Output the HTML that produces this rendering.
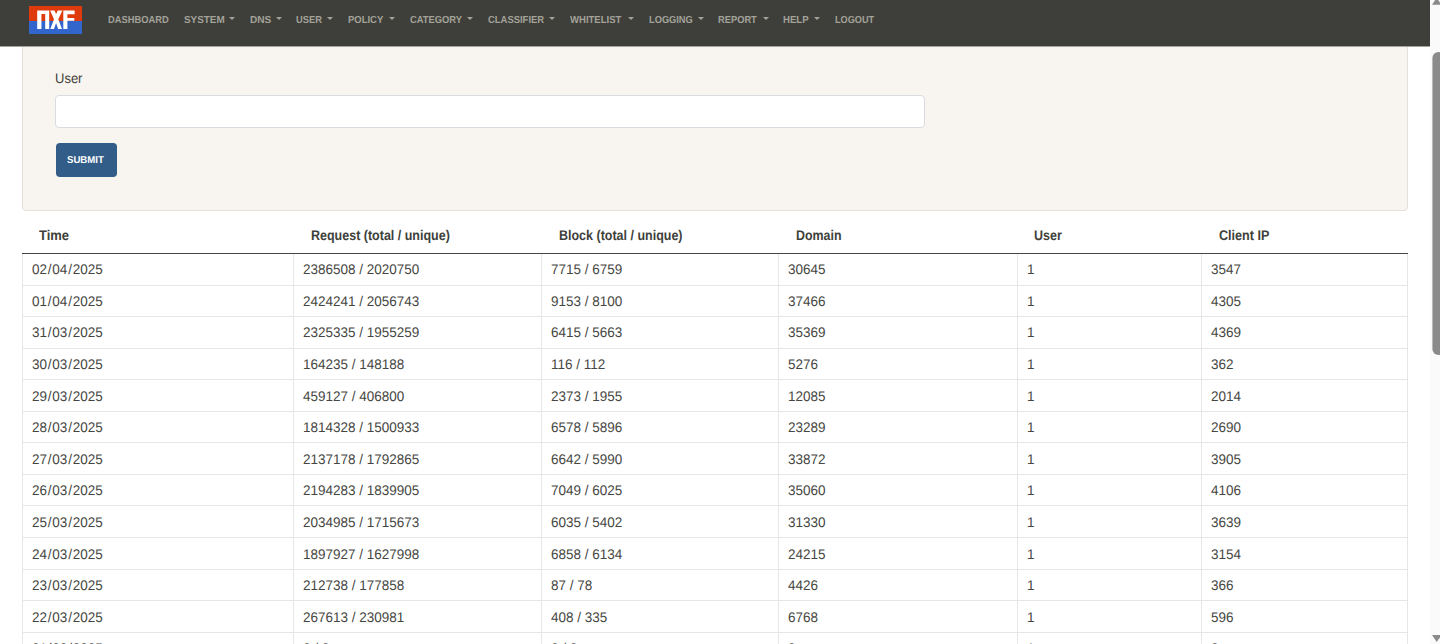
<!DOCTYPE html>
<html><head><meta charset="utf-8"><style>
html,body{margin:0;padding:0;background:#fff;width:1440px;height:644px;overflow:hidden;position:relative}
body{font-family:"Liberation Sans",sans-serif}
.t{position:absolute;white-space:pre;line-height:1;transform-origin:0 0;font-family:"Liberation Sans",sans-serif;text-rendering:geometricPrecision}
.nav{position:absolute;left:0;top:0;width:1430px;height:46px;background:#3e3f3a;z-index:5}
.caret{position:absolute;top:16.8px;width:0;height:0;border-top:3px solid #a3a299;border-left:3px solid transparent;border-right:3px solid transparent}
.card{position:absolute;left:22px;top:-10px;width:1384px;height:219px;background:#f8f5f0;border:1px solid #e5e0d8;border-radius:4px}
.input{position:absolute;left:55px;top:95px;width:868px;height:31px;background:#fff;border:1px solid #d8dce1;border-radius:4px}
.btn{position:absolute;left:55.5px;top:143px;width:61.5px;height:33.5px;background:#325d88;border-radius:4px}
.hl{position:absolute;left:22px;width:1386px;height:1px;background:#e6e6e6}
.vl{position:absolute;top:254px;width:1px;height:390px;background:#e6e6e6}
.sb{position:absolute;left:1430px;top:0;width:10px;height:644px;background:#fafafa;z-index:6}
</style></head><body>
<div style="position:absolute;left:0;top:46px;width:1430px;height:1px;background:#a4a39e;z-index:5"></div>
<div class="nav">
<svg style="position:absolute;left:29px;top:6px" width="53" height="28" viewBox="0 0 53 28"><rect x="0" y="0" width="53" height="15" fill="#df3a0c"/><rect x="0" y="15" width="53" height="13" fill="#3366cc"/><path fill="#fff" d="M8.2 4.4H20.2V22.9H16.2V8H12.45V22.9H8.2Z"/><path fill="#fff" d="M21.1 4.4H25.5L27.1 8.1L28.7 4.4H33.4L29.3 13.2L33 22.9H29.1L27.1 16.9L25 22.9H21.3L25 13.2Z"/><path fill="#fff" d="M34.3 4.4H45.6V8.15H38.4V12.06H45.3V14.86H38.4V22.9H34.3Z"/></svg>
<span class="t" style="left:107.84px;top:15.70px;font-size:10.2px;font-weight:700;color:#a3a299;transform:scaleX(0.9160);">DASHBOARD</span>
<span class="t" style="left:183.66px;top:15.70px;font-size:10.2px;font-weight:700;color:#a3a299;transform:scaleX(0.9697);">SYSTEM</span>
<span class="t" style="left:249.50px;top:15.70px;font-size:10.2px;font-weight:700;color:#a3a299;transform:scaleX(0.9928);">DNS</span>
<span class="t" style="left:296.44px;top:15.70px;font-size:10.2px;font-weight:700;color:#a3a299;transform:scaleX(0.9200);">USER</span>
<span class="t" style="left:348.24px;top:15.70px;font-size:10.2px;font-weight:700;color:#a3a299;transform:scaleX(0.9289);">POLICY</span>
<span class="t" style="left:409.77px;top:15.70px;font-size:10.2px;font-weight:700;color:#a3a299;transform:scaleX(0.9191);">CATEGORY</span>
<span class="t" style="left:488.07px;top:15.70px;font-size:10.2px;font-weight:700;color:#a3a299;transform:scaleX(0.9267);">CLASSIFIER</span>
<span class="t" style="left:570.20px;top:15.70px;font-size:10.2px;font-weight:700;color:#a3a299;transform:scaleX(0.9364);">WHITELIST</span>
<span class="t" style="left:648.94px;top:15.70px;font-size:10.2px;font-weight:700;color:#a3a299;transform:scaleX(0.9101);">LOGGING</span>
<span class="t" style="left:717.84px;top:15.70px;font-size:10.2px;font-weight:700;color:#a3a299;transform:scaleX(0.9143);">REPORT</span>
<span class="t" style="left:783.43px;top:15.70px;font-size:10.2px;font-weight:700;color:#a3a299;transform:scaleX(0.9434);">HELP</span>
<span class="t" style="left:835.15px;top:15.70px;font-size:10.2px;font-weight:700;color:#a3a299;transform:scaleX(0.8971);">LOGOUT</span>
<div class="caret" style="left:229.4px"></div>
<div class="caret" style="left:275.8px"></div>
<div class="caret" style="left:327.2px"></div>
<div class="caret" style="left:388.9px"></div>
<div class="caret" style="left:467.2px"></div>
<div class="caret" style="left:548.9px"></div>
<div class="caret" style="left:628.0px"></div>
<div class="caret" style="left:697.8px"></div>
<div class="caret" style="left:762.6px"></div>
<div class="caret" style="left:814.4px"></div>
</div>
<div class="card"></div>
<span class="t" style="left:54.67px;top:71.20px;font-size:14px;font-weight:400;color:#3e3f3a;transform:scaleX(0.9281);">User</span>
<div class="input"></div>
<div class="btn"></div>
<span class="t" style="left:67.26px;top:155.50px;font-size:10px;font-weight:700;color:#fff;transform:scaleX(0.9621);">SUBMIT</span>
<span class="t" style="left:38.90px;top:228.00px;font-size:14px;font-weight:700;color:#3e3f3a;transform:scaleX(0.9281);">Time</span>
<span class="t" style="left:311.03px;top:228.00px;font-size:14px;font-weight:700;color:#3e3f3a;transform:scaleX(0.8927);">Request (total / unique)</span>
<span class="t" style="left:559.33px;top:228.00px;font-size:14px;font-weight:700;color:#3e3f3a;transform:scaleX(0.8920);">Block (total / unique)</span>
<span class="t" style="left:796.04px;top:228.00px;font-size:14px;font-weight:700;color:#3e3f3a;transform:scaleX(0.8864);">Domain</span>
<span class="t" style="left:1034.03px;top:228.00px;font-size:14px;font-weight:700;color:#3e3f3a;transform:scaleX(0.8926);">User</span>
<span class="t" style="left:1218.75px;top:228.00px;font-size:14px;font-weight:700;color:#3e3f3a;transform:scaleX(0.8982);">Client IP</span>
<div class="hl" style="top:253px;background:#464646"></div>
<div class="hl" style="top:285px"></div>
<div class="hl" style="top:316px"></div>
<div class="hl" style="top:348px"></div>
<div class="hl" style="top:379px"></div>
<div class="hl" style="top:411px"></div>
<div class="hl" style="top:442px"></div>
<div class="hl" style="top:474px"></div>
<div class="hl" style="top:505px"></div>
<div class="hl" style="top:537px"></div>
<div class="hl" style="top:569px"></div>
<div class="hl" style="top:600px"></div>
<div class="hl" style="top:632px"></div>
<div class="vl" style="left:22px"></div>
<div class="vl" style="left:293px"></div>
<div class="vl" style="left:541px"></div>
<div class="vl" style="left:778px"></div>
<div class="vl" style="left:1017px"></div>
<div class="vl" style="left:1201px"></div>
<div class="vl" style="left:1407px"></div>
<span class="t" style="left:31.72px;top:262.05px;font-size:14px;color:#454641;transform:scaleX(0.964)">02<span style="padding:0 0.83px">/</span>04<span style="padding:0 0.83px">/</span>2025</span>
<span class="t" style="left:302.72px;top:262.05px;font-size:14px;color:#454641;transform:scaleX(0.964)">2386508 / 2020750</span>
<span class="t" style="left:550.72px;top:262.05px;font-size:14px;color:#454641;transform:scaleX(0.964)">7715 / 6759</span>
<span class="t" style="left:787.72px;top:262.05px;font-size:14px;color:#454641;transform:scaleX(0.964)">30645</span>
<span class="t" style="left:1026.72px;top:262.05px;font-size:14px;color:#454641;transform:scaleX(0.964)">1</span>
<span class="t" style="left:1210.72px;top:262.05px;font-size:14px;color:#454641;transform:scaleX(0.964)">3547</span>
<span class="t" style="left:31.72px;top:293.68px;font-size:14px;color:#454641;transform:scaleX(0.964)">01<span style="padding:0 0.83px">/</span>04<span style="padding:0 0.83px">/</span>2025</span>
<span class="t" style="left:302.72px;top:293.68px;font-size:14px;color:#454641;transform:scaleX(0.964)">2424241 / 2056743</span>
<span class="t" style="left:550.72px;top:293.68px;font-size:14px;color:#454641;transform:scaleX(0.964)">9153 / 8100</span>
<span class="t" style="left:787.72px;top:293.68px;font-size:14px;color:#454641;transform:scaleX(0.964)">37466</span>
<span class="t" style="left:1026.72px;top:293.68px;font-size:14px;color:#454641;transform:scaleX(0.964)">1</span>
<span class="t" style="left:1210.72px;top:293.68px;font-size:14px;color:#454641;transform:scaleX(0.964)">4305</span>
<span class="t" style="left:31.72px;top:325.31px;font-size:14px;color:#454641;transform:scaleX(0.964)">31<span style="padding:0 0.83px">/</span>03<span style="padding:0 0.83px">/</span>2025</span>
<span class="t" style="left:302.72px;top:325.31px;font-size:14px;color:#454641;transform:scaleX(0.964)">2325335 / 1955259</span>
<span class="t" style="left:550.72px;top:325.31px;font-size:14px;color:#454641;transform:scaleX(0.964)">6415 / 5663</span>
<span class="t" style="left:787.72px;top:325.31px;font-size:14px;color:#454641;transform:scaleX(0.964)">35369</span>
<span class="t" style="left:1026.72px;top:325.31px;font-size:14px;color:#454641;transform:scaleX(0.964)">1</span>
<span class="t" style="left:1210.72px;top:325.31px;font-size:14px;color:#454641;transform:scaleX(0.964)">4369</span>
<span class="t" style="left:31.72px;top:356.94px;font-size:14px;color:#454641;transform:scaleX(0.964)">30<span style="padding:0 0.83px">/</span>03<span style="padding:0 0.83px">/</span>2025</span>
<span class="t" style="left:302.72px;top:356.94px;font-size:14px;color:#454641;transform:scaleX(0.964)">164235 / 148188</span>
<span class="t" style="left:550.72px;top:356.94px;font-size:14px;color:#454641;transform:scaleX(0.964)">116 / 112</span>
<span class="t" style="left:787.72px;top:356.94px;font-size:14px;color:#454641;transform:scaleX(0.964)">5276</span>
<span class="t" style="left:1026.72px;top:356.94px;font-size:14px;color:#454641;transform:scaleX(0.964)">1</span>
<span class="t" style="left:1210.72px;top:356.94px;font-size:14px;color:#454641;transform:scaleX(0.964)">362</span>
<span class="t" style="left:31.72px;top:388.57px;font-size:14px;color:#454641;transform:scaleX(0.964)">29<span style="padding:0 0.83px">/</span>03<span style="padding:0 0.83px">/</span>2025</span>
<span class="t" style="left:302.72px;top:388.57px;font-size:14px;color:#454641;transform:scaleX(0.964)">459127 / 406800</span>
<span class="t" style="left:550.72px;top:388.57px;font-size:14px;color:#454641;transform:scaleX(0.964)">2373 / 1955</span>
<span class="t" style="left:787.72px;top:388.57px;font-size:14px;color:#454641;transform:scaleX(0.964)">12085</span>
<span class="t" style="left:1026.72px;top:388.57px;font-size:14px;color:#454641;transform:scaleX(0.964)">1</span>
<span class="t" style="left:1210.72px;top:388.57px;font-size:14px;color:#454641;transform:scaleX(0.964)">2014</span>
<span class="t" style="left:31.72px;top:420.20px;font-size:14px;color:#454641;transform:scaleX(0.964)">28<span style="padding:0 0.83px">/</span>03<span style="padding:0 0.83px">/</span>2025</span>
<span class="t" style="left:302.72px;top:420.20px;font-size:14px;color:#454641;transform:scaleX(0.964)">1814328 / 1500933</span>
<span class="t" style="left:550.72px;top:420.20px;font-size:14px;color:#454641;transform:scaleX(0.964)">6578 / 5896</span>
<span class="t" style="left:787.72px;top:420.20px;font-size:14px;color:#454641;transform:scaleX(0.964)">23289</span>
<span class="t" style="left:1026.72px;top:420.20px;font-size:14px;color:#454641;transform:scaleX(0.964)">1</span>
<span class="t" style="left:1210.72px;top:420.20px;font-size:14px;color:#454641;transform:scaleX(0.964)">2690</span>
<span class="t" style="left:31.72px;top:451.83px;font-size:14px;color:#454641;transform:scaleX(0.964)">27<span style="padding:0 0.83px">/</span>03<span style="padding:0 0.83px">/</span>2025</span>
<span class="t" style="left:302.72px;top:451.83px;font-size:14px;color:#454641;transform:scaleX(0.964)">2137178 / 1792865</span>
<span class="t" style="left:550.72px;top:451.83px;font-size:14px;color:#454641;transform:scaleX(0.964)">6642 / 5990</span>
<span class="t" style="left:787.72px;top:451.83px;font-size:14px;color:#454641;transform:scaleX(0.964)">33872</span>
<span class="t" style="left:1026.72px;top:451.83px;font-size:14px;color:#454641;transform:scaleX(0.964)">1</span>
<span class="t" style="left:1210.72px;top:451.83px;font-size:14px;color:#454641;transform:scaleX(0.964)">3905</span>
<span class="t" style="left:31.72px;top:483.46px;font-size:14px;color:#454641;transform:scaleX(0.964)">26<span style="padding:0 0.83px">/</span>03<span style="padding:0 0.83px">/</span>2025</span>
<span class="t" style="left:302.72px;top:483.46px;font-size:14px;color:#454641;transform:scaleX(0.964)">2194283 / 1839905</span>
<span class="t" style="left:550.72px;top:483.46px;font-size:14px;color:#454641;transform:scaleX(0.964)">7049 / 6025</span>
<span class="t" style="left:787.72px;top:483.46px;font-size:14px;color:#454641;transform:scaleX(0.964)">35060</span>
<span class="t" style="left:1026.72px;top:483.46px;font-size:14px;color:#454641;transform:scaleX(0.964)">1</span>
<span class="t" style="left:1210.72px;top:483.46px;font-size:14px;color:#454641;transform:scaleX(0.964)">4106</span>
<span class="t" style="left:31.72px;top:515.09px;font-size:14px;color:#454641;transform:scaleX(0.964)">25<span style="padding:0 0.83px">/</span>03<span style="padding:0 0.83px">/</span>2025</span>
<span class="t" style="left:302.72px;top:515.09px;font-size:14px;color:#454641;transform:scaleX(0.964)">2034985 / 1715673</span>
<span class="t" style="left:550.72px;top:515.09px;font-size:14px;color:#454641;transform:scaleX(0.964)">6035 / 5402</span>
<span class="t" style="left:787.72px;top:515.09px;font-size:14px;color:#454641;transform:scaleX(0.964)">31330</span>
<span class="t" style="left:1026.72px;top:515.09px;font-size:14px;color:#454641;transform:scaleX(0.964)">1</span>
<span class="t" style="left:1210.72px;top:515.09px;font-size:14px;color:#454641;transform:scaleX(0.964)">3639</span>
<span class="t" style="left:31.72px;top:546.72px;font-size:14px;color:#454641;transform:scaleX(0.964)">24<span style="padding:0 0.83px">/</span>03<span style="padding:0 0.83px">/</span>2025</span>
<span class="t" style="left:302.72px;top:546.72px;font-size:14px;color:#454641;transform:scaleX(0.964)">1897927 / 1627998</span>
<span class="t" style="left:550.72px;top:546.72px;font-size:14px;color:#454641;transform:scaleX(0.964)">6858 / 6134</span>
<span class="t" style="left:787.72px;top:546.72px;font-size:14px;color:#454641;transform:scaleX(0.964)">24215</span>
<span class="t" style="left:1026.72px;top:546.72px;font-size:14px;color:#454641;transform:scaleX(0.964)">1</span>
<span class="t" style="left:1210.72px;top:546.72px;font-size:14px;color:#454641;transform:scaleX(0.964)">3154</span>
<span class="t" style="left:31.72px;top:578.35px;font-size:14px;color:#454641;transform:scaleX(0.964)">23<span style="padding:0 0.83px">/</span>03<span style="padding:0 0.83px">/</span>2025</span>
<span class="t" style="left:302.72px;top:578.35px;font-size:14px;color:#454641;transform:scaleX(0.964)">212738 / 177858</span>
<span class="t" style="left:550.72px;top:578.35px;font-size:14px;color:#454641;transform:scaleX(0.964)">87 / 78</span>
<span class="t" style="left:787.72px;top:578.35px;font-size:14px;color:#454641;transform:scaleX(0.964)">4426</span>
<span class="t" style="left:1026.72px;top:578.35px;font-size:14px;color:#454641;transform:scaleX(0.964)">1</span>
<span class="t" style="left:1210.72px;top:578.35px;font-size:14px;color:#454641;transform:scaleX(0.964)">366</span>
<span class="t" style="left:31.72px;top:609.98px;font-size:14px;color:#454641;transform:scaleX(0.964)">22<span style="padding:0 0.83px">/</span>03<span style="padding:0 0.83px">/</span>2025</span>
<span class="t" style="left:302.72px;top:609.98px;font-size:14px;color:#454641;transform:scaleX(0.964)">267613 / 230981</span>
<span class="t" style="left:550.72px;top:609.98px;font-size:14px;color:#454641;transform:scaleX(0.964)">408 / 335</span>
<span class="t" style="left:787.72px;top:609.98px;font-size:14px;color:#454641;transform:scaleX(0.964)">6768</span>
<span class="t" style="left:1026.72px;top:609.98px;font-size:14px;color:#454641;transform:scaleX(0.964)">1</span>
<span class="t" style="left:1210.72px;top:609.98px;font-size:14px;color:#454641;transform:scaleX(0.964)">596</span>
<span class="t" style="left:31.72px;top:641.01px;font-size:14px;color:#454641;transform:scaleX(0.964)">21<span style="padding:0 0.83px">/</span>03<span style="padding:0 0.83px">/</span>2025</span>
<span class="t" style="left:302.72px;top:641.01px;font-size:14px;color:#454641;transform:scaleX(0.964)">2 / 2</span>
<span class="t" style="left:550.72px;top:641.01px;font-size:14px;color:#454641;transform:scaleX(0.964)">2 / 2</span>
<span class="t" style="left:787.72px;top:641.01px;font-size:14px;color:#454641;transform:scaleX(0.964)">2</span>
<span class="t" style="left:1026.72px;top:641.01px;font-size:14px;color:#454641;transform:scaleX(0.964)">1</span>
<span class="t" style="left:1210.72px;top:641.01px;font-size:14px;color:#454641;transform:scaleX(0.964)">2</span>
<div class="sb"><div style="position:absolute;left:2px;top:52px;width:12px;height:303px;background:#8a8a8a;border-radius:6px;transform:translateX(0.4px)"></div><svg style="position:absolute;left:0;top:0" width="10" height="644"><path d="M2 4.7L6.7 -2.3L11.4 4.7Z" fill="#8a8a8a"/><path d="M2 635.1L11.4 635.1L6.7 642Z" fill="#8a8a8a"/></svg></div>
</body></html>
